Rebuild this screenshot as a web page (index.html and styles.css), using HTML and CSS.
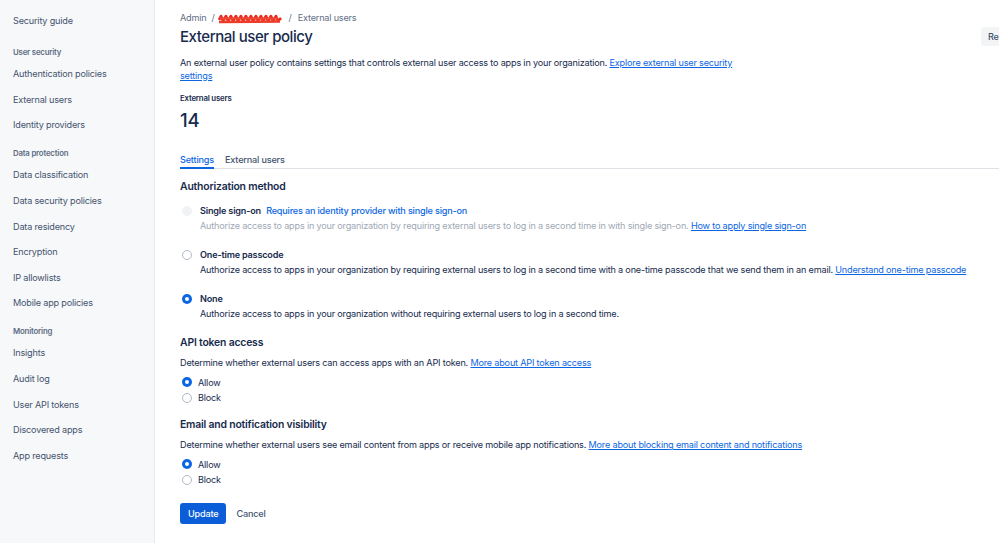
FILE: index.html
```html
<!DOCTYPE html>
<html lang="en">
<head>
<meta charset="utf-8">
<title>External user policy</title>
<link rel="stylesheet" href="styles.css">
</head>
<body>
<div class="app">
  <nav class="sidebar">
    <a class="nav-item nav-first">Security guide</a>
    <div class="nav-heading nav-heading-first">User security</div>
    <a class="nav-item">Authentication policies</a>
    <a class="nav-item">External users</a>
    <a class="nav-item">Identity providers</a>
    <div class="nav-heading">Data protection</div>
    <a class="nav-item">Data classification</a>
    <a class="nav-item">Data security policies</a>
    <a class="nav-item">Data residency</a>
    <a class="nav-item">Encryption</a>
    <a class="nav-item">IP allowlists</a>
    <a class="nav-item">Mobile app policies</a>
    <div class="nav-heading">Monitoring</div>
    <a class="nav-item">Insights</a>
    <a class="nav-item">Audit log</a>
    <a class="nav-item">User API tokens</a>
    <a class="nav-item">Discovered apps</a>
    <a class="nav-item">App requests</a>
  </nav>

  <main class="main">
    <div class="breadcrumbs">
      <span>Admin</span>
      <span class="sep">/</span>
      <span class="redact"><svg width="64" height="11" viewBox="0 0 64 11"><path d="M1 7 L3 3 L5 8 L8 3 L10 8 L13 3 L15 8 L18 3 L20 8 L23 3 L25 8 L28 3 L30 8 L33 3 L35 8 L38 3 L40 8 L43 3 L45 8 L48 3 L50 8 L53 3 L55 8 L58 3 L60 8 L63 5" fill="none" stroke="#ea2a1c" stroke-width="2.6" stroke-linejoin="round"/><path d="M1 9 L62 8.5" stroke="#ef3b2a" stroke-width="2.4"/><path d="M2 5.5 L60 5.5" stroke="#f04a36" stroke-width="2"/></svg></span>
      <span class="sep sep-last">/</span>
      <span>External users</span>
    </div>

    <div class="page-head">
      <h1 class="title">External user policy</h1>
      <button class="head-btn">Re</button>
    </div>

    <p class="intro">An external user policy contains settings that controls external user access to apps in your organization. <a class="link">Explore external user security settings</a></p>

    <div class="stat-label">External users</div>
    <div class="stat-value">14</div>

    <div class="tabs">
      <span class="tab tab-active">Settings</span>
      <span class="tab">External users</span>
    </div>

    <h2 class="section-title first-section">Authorization method</h2>
    <div class="options">
      <div class="option">
        <span class="radio radio-disabled"></span>
        <div class="option-body">
          <div class="option-title">Single sign-on <span class="option-req">Requires an identity provider with single sign-on</span></div>
          <div class="option-desc desc-disabled">Authorize access to apps in your organization by requiring external users to log in a second time in with single sign-on. <a class="link">How to apply single sign-on</a></div>
        </div>
      </div>
      <div class="option">
        <span class="radio"></span>
        <div class="option-body">
          <div class="option-title">One-time passcode</div>
          <div class="option-desc">Authorize access to apps in your organization by requiring external users to log in a second time with a one-time passcode that we send them in an email. <a class="link">Understand one-time passcode</a></div>
        </div>
      </div>
      <div class="option">
        <span class="radio radio-checked"></span>
        <div class="option-body">
          <div class="option-title">None</div>
          <div class="option-desc">Authorize access to apps in your organization without requiring external users to log in a second time.</div>
        </div>
      </div>
    </div>

    <h2 class="section-title after-options">API token access</h2>
    <p class="section-desc">Determine whether external users can access apps with an API token. <a class="link">More about API token access</a></p>
    <div class="choices">
      <div class="choice"><span class="radio radio-checked"></span><span>Allow</span></div>
      <div class="choice"><span class="radio"></span><span>Block</span></div>
    </div>

    <h2 class="section-title">Email and notification visibility</h2>
    <p class="section-desc">Determine whether external users see email content from apps or receive mobile app notifications. <a class="link">More about blocking email content and notifications</a></p>
    <div class="choices">
      <div class="choice"><span class="radio radio-checked"></span><span>Allow</span></div>
      <div class="choice"><span class="radio"></span><span>Block</span></div>
    </div>

    <div class="actions">
      <button class="btn btn-primary">Update</button>
      <button class="btn btn-subtle">Cancel</button>
    </div>
  </main>
</div>
</body>
</html>
```
FILE: styles.css
```css
* { box-sizing: border-box; }

html, body {
  margin: 0;
  padding: 0;
  height: 100%;
  overflow: hidden;
  background: #ffffff;
}

body {
  font-family: Inter, "Liberation Sans", Arial, sans-serif;
  font-size: 9.1px;
  color: #172b4d;
  letter-spacing: -0.02em;
}

.app {
  display: flex;
  height: 543px;
}

/* Sidebar */
.sidebar {
  width: 155px;
  flex: none;
  background: #f7f8f9;
  border-right: 1px solid #ebecf0;
  padding-top: 7.5px;
  display: flex;
  flex-direction: column;
}

.nav-item {
  display: block;
  height: 25.6px;
  line-height: 25.6px;
  padding-left: 13px;
  color: #44546f;
  text-decoration: none;
}

.nav-heading {
  height: 14px;
  line-height: 14px;
  margin-top: 8.5px;
  margin-bottom: 2px;
  padding-left: 13px;
  font-size: 7.8px;
  font-weight: 600;
  color: #5e6c84;
}

.nav-heading-first { margin-top: 12px; }

/* Main */
.main {
  flex: 1;
  min-width: 0;
  padding: 11px 0 0 25px;
}

.breadcrumbs {
  display: flex;
  align-items: center;
  height: 14px;
  line-height: 14px;
  color: #626f86;
}

.sep { margin: 0 3px 0 5px; }

.sep-last { margin-right: 6px; }

.redact {
  display: inline-flex;
  margin: 1px 2px 0 0;
}

.page-head {
  display: flex;
  justify-content: space-between;
  align-items: flex-start;
  margin-top: 2px;
}

.title {
  margin: 0;
  font-size: 15px;
  line-height: 20px;
  font-weight: 500;
  color: #172b4d;
  letter-spacing: -0.03em;
}

.head-btn {
  height: 19px;
  border: 0;
  border-radius: 3px 0 0 3px;
  background: #f3f4f6;
  color: #44546f;
  font-family: inherit;
  font-size: 9.1px;
  font-weight: 500;
  padding: 0 0 0 7px;
  width: 18px;
  text-align: left;
  overflow: hidden;
  letter-spacing: -0.02em;
}

.intro {
  margin: 10px 0 0;
  width: 562px;
  line-height: 12.5px;
  color: #172b4d;
}

.link {
  color: #0c66e4;
  text-decoration: underline;
  text-underline-offset: 1px;
}

.stat-label {
  margin-top: 10px;
  line-height: 12px;
  font-size: 7.8px;
  font-weight: 600;
  color: #172b4d;
}

.stat-value {
  margin-top: 5px;
  line-height: 22px;
  font-size: 18.5px;
  font-weight: 500;
  color: #172b4d;
}

.tabs {
  display: flex;
  gap: 11px;
  margin-top: 21px;
  border-bottom: 1px solid #dfe1e6;
}

.tab {
  line-height: 14px;
  padding-top: 1px;
  border-bottom: 2px solid transparent;
  margin-bottom: -1px;
  color: #44546f;
  font-weight: 500;
}

.tab-active {
  color: #0c66e4;
  border-bottom-color: #0c66e4;
}

.section-title {
  margin: 11.5px 0 0;
  font-size: 10.4px;
  line-height: 16px;
  font-weight: 600;
  color: #172b4d;
}

.first-section { margin-top: 10px; }

.after-options { margin-top: 14px; }

.options {
  display: flex;
  flex-direction: column;
  gap: 15.5px;
  margin-top: 9px;
}

.option {
  display: flex;
  align-items: flex-start;
}

.option .radio {
  margin: 2px 8px 0 2px;
}

.option-title {
  line-height: 14px;
  font-weight: 600;
  color: #172b4d;
}

.option-req {
  margin-left: 3px;
  color: #0c66e4;
  font-weight: 500;
}

.option-desc {
  margin-top: 0.5px;
  line-height: 14px;
  color: #172b4d;
}

.desc-disabled { color: #a0a8b5; }

.radio {
  flex: none;
  width: 10px;
  height: 10px;
  border-radius: 50%;
  border: 1px solid #b3b9c4;
  background: #ffffff;
  display: inline-block;
  position: relative;
}

.radio-disabled {
  border-color: #f1f2f4;
  background: #f1f2f4;
}

.radio-checked {
  border: 0;
  background: #0c66e4;
}

.radio-checked::after {
  content: "";
  position: absolute;
  left: 3px;
  top: 3px;
  width: 4px;
  height: 4px;
  border-radius: 50%;
  background: #ffffff;
}

.section-desc {
  margin: 5.5px 0 0;
  line-height: 14px;
  color: #172b4d;
}

.choices {
  margin-top: 4.25px;
}

.choice {
  display: flex;
  align-items: center;
  height: 15.5px;
  color: #172b4d;
}

.choice .radio {
  margin: 0 6px 0 2px;
}

.actions {
  display: flex;
  gap: 2px;
  margin-top: 15px;
}

.btn {
  height: 21px;
  border: 0;
  border-radius: 3px;
  font-family: inherit;
  font-size: 9.1px;
  font-weight: 500;
  padding: 0 8px;
  letter-spacing: -0.02em;
}

.btn-primary {
  background: #0b5ed7;
  color: #ffffff;
}

.btn-subtle {
  background: transparent;
  color: #44546f;
}
```
